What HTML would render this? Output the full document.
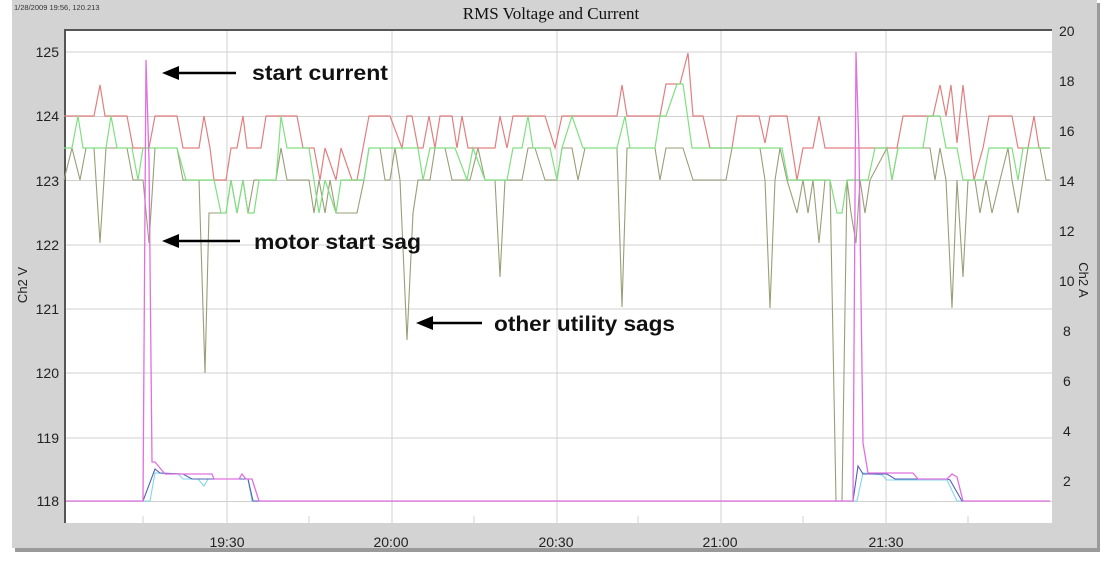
<!DOCTYPE html>
<html><head><meta charset="utf-8"><style>
body{margin:0;width:1105px;height:561px;background:#fff;overflow:hidden;font-family:"Liberation Sans",sans-serif}
</style></head><body>
<svg width="1105" height="561" xmlns="http://www.w3.org/2000/svg" style="position:absolute;left:0;top:0">
<rect x="15" y="3" width="1085" height="549" fill="#9a9a9a"/>
<rect x="12" y="0" width="1085" height="548" fill="#d3d3d3"/>
<rect x="64" y="29" width="988" height="494" fill="#fff"/>
<rect x="64" y="29" width="988" height="2" fill="#555"/>
<rect x="64" y="29" width="2" height="494" fill="#555"/>
<g stroke="#d0d0d0" stroke-width="1">
<line x1="66" x2="1052" y1="52" y2="52"/><line x1="66" x2="1052" y1="116.5" y2="116.5"/><line x1="66" x2="1052" y1="180.5" y2="180.5"/><line x1="66" x2="1052" y1="245" y2="245"/><line x1="66" x2="1052" y1="309" y2="309"/><line x1="66" x2="1052" y1="373" y2="373"/><line x1="66" x2="1052" y1="438" y2="438"/><line x1="66" x2="1052" y1="501.5" y2="501.5"/>
<line x1="227" x2="227" y1="31" y2="523"/><line x1="392" x2="392" y1="31" y2="523"/><line x1="557" x2="557" y1="31" y2="523"/><line x1="721" x2="721" y1="31" y2="523"/><line x1="886" x2="886" y1="31" y2="523"/>
<line x1="143" x2="143" y1="516" y2="523"/><line x1="309" x2="309" y1="516" y2="523"/><line x1="474" x2="474" y1="516" y2="523"/><line x1="638" x2="638" y1="516" y2="523"/><line x1="803" x2="803" y1="516" y2="523"/><line x1="968" x2="968" y1="516" y2="523"/>
</g>
<polyline fill="none" stroke="#e08080" stroke-width="1.2" points="64,116 94,116 100,85 105,116 127,116 133,148 149,148 155,116 177,116 183,148 199,148 204,116 210,148 214,180 226,180 231,148 237,148 243,116 247,148 261,148 266,116 297,116 303,148 314,148 320,180 325,148 336,180 341,148 352,180 357,180 369,116 390,116 402,148 407,116 412,116 418,148 423,148 429,116 435,148 440,116 452,116 457,148 462,116 468,148 495,148 500,116 507,148 513,116 545,116 555,148 562,116 617,116 622,85 627,116 660,116 666,84 680,84 688,53 693,116 703,116 710,148 732,148 737,116 759,116 765,143 770,116 787,116 797,180 803,148 813,148 819,116 825,148 897,148 903,116 933,116 940,85 946,116 951,85 957,143 963,85 974,180 983,148 989,116 1012,116 1018,148 1028,148 1034,116 1039,148 1050,148"/>
<polyline fill="none" stroke="#9a9e78" stroke-width="1.1" points="64,180 72,148 80,180 86,148 94,148 100,243 106,148 127,148 133,180 143,180 149,243 155,148 177,148 183,180 199,180 205,373 209,213 226,213 231,180 237,213 243,180 248,213 254,180 276,180 281,148 287,180 309,180 314,213 319,180 325,213 330,180 336,213 357,213 364,180 369,148 380,148 385,180 390,180 395,148 400,180 407,340 413,213 418,180 430,180 435,148 445,148 452,180 470,180 478,148 485,180 495,180 500,277 505,180 522,180 528,148 535,148 545,180 557,180 562,148 572,148 578,180 585,148 617,148 622,307 627,148 655,148 660,180 666,148 683,148 693,180 726,180 732,148 760,148 765,180 770,308 775,180 780,148 787,180 797,213 803,180 808,213 813,180 819,243 825,180 830,180 836,501 842,501 847,180 851,213 856,243 860,180 865,213 870,180 887,148 892,180 898,148 930,148 935,180 940,148 946,180 952,308 957,180 963,277 968,180 975,180 980,213 986,180 992,213 1000,180 1008,148 1012,180 1018,213 1023,180 1028,148 1040,148 1046,180 1050,180"/>
<polyline fill="none" stroke="#80e080" stroke-width="1.2" points="64,148 72,148 78,116 83,148 106,148 111,116 117,148 132,148 138,180 143,148 177,148 186,180 214,180 221,213 226,213 231,180 237,213 243,180 248,213 254,213 259,180 276,180 281,116 287,148 309,148 319,213 325,180 336,213 341,180 364,180 369,148 418,148 423,180 430,148 455,148 467,180 473,148 485,180 507,180 513,148 522,148 528,116 533,148 550,148 557,180 562,148 572,116 583,148 617,148 625,116 630,148 655,148 660,116 666,116 677,84 683,84 692,148 782,148 788,180 830,180 837,213 842,213 847,180 868,180 875,148 887,148 892,180 898,148 923,148 928,116 940,116 946,148 957,148 963,180 983,180 989,148 1012,148 1018,180 1023,148 1050,148"/>
<polyline fill="none" stroke="#80d8e8" stroke-width="1.1" points="66,501 150,501 155,473 178,474 183,479 198,479 204,486 208,479 248,479 252,501 857,501 863,473 882,475 887,480 947,480 957,501 1050,501"/>
<polyline fill="none" stroke="#5060b8" stroke-width="1.1" points="66,501 143,501 155,469 160,473 183,474 192,479 248,479 253,501 853,501 858,466 863,474 887,474 895,479 947,479 950,480 962,501 1050,501"/>
<polyline fill="none" stroke="#e070e0" stroke-width="1.3" points="66,501 143,501 146,60 149,160 152,462 155,462 165,474 212,474 214,479 239,479 242,474 246,479 252,479 259,501 853,501 856,52 859,150 863,443 868,473 913,473 918,479 947,479 952,474 957,477 963,501 1050,501"/>
<g stroke="#000" stroke-width="2.5"><line x1="172" y1="73" x2="236" y2="73"/><line x1="172" y1="241" x2="240" y2="241"/><line x1="425" y1="323" x2="482" y2="323"/></g>
<g fill="#000"><polygon points="162,73 179,66 179,80"/><polygon points="162,241 179,234 179,248"/><polygon points="416,323 433,316 433,330"/></g>
<g font-family="Liberation Sans,sans-serif" font-size="21" font-weight="bold" fill="#111"><text x="252" y="80" textLength="136" lengthAdjust="spacingAndGlyphs">start current</text><text x="254" y="249" textLength="167" lengthAdjust="spacingAndGlyphs">motor start sag</text><text x="494" y="331" textLength="181" lengthAdjust="spacingAndGlyphs">other utility sags</text></g>
<text x="551" y="19" text-anchor="middle" font-family="Liberation Serif,serif" font-size="17" fill="#111">RMS Voltage and Current</text>
<text x="14" y="10" font-size="7.5" fill="#333">1/28/2009 19:56, 120.213</text>
<g font-size="14" fill="#222" text-anchor="end"><text x="59" y="57">125</text><text x="59" y="121">124</text><text x="59" y="186">123</text><text x="59" y="250">122</text><text x="59" y="314">121</text><text x="59" y="378">120</text><text x="59" y="443">119</text><text x="59" y="506">118</text></g>
<g font-size="14" fill="#222"><text x="1059" y="36">20</text><text x="1059" y="86">18</text><text x="1059" y="136">16</text><text x="1059" y="186">14</text><text x="1059" y="236">12</text><text x="1059" y="286">10</text><text x="1063" y="336">8</text><text x="1063" y="386">6</text><text x="1063" y="436">4</text><text x="1063" y="486">2</text></g>
<g font-size="14" fill="#222" text-anchor="middle"><text x="227" y="547">19:30</text><text x="391" y="547">20:00</text><text x="556" y="547">20:30</text><text x="720" y="547">21:00</text><text x="886" y="547">21:30</text></g>
<text transform="translate(27,285) rotate(-90)" font-size="13" fill="#222" text-anchor="middle">Ch2 V</text>
<text transform="translate(1079,280) rotate(90)" font-size="13" fill="#222" text-anchor="middle">Ch2 A</text>
</svg>
</body></html>
